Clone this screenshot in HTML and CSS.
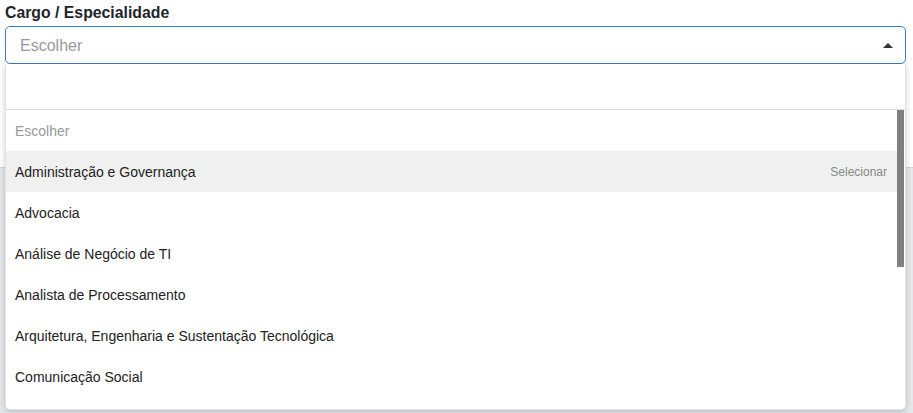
FILE: index.html
```html
<!DOCTYPE html>
<html lang="pt-BR">
<head>
  <meta charset="UTF-8">
  <meta name="viewport" content="width=913, initial-scale=1.0">
  <title>Cargo / Especialidade</title>
  <link rel="stylesheet" href="styles.css">
</head>
<body>
  <div class="field">
    <label class="field-label">Cargo / Especialidade</label>
    <div class="select open">
      <span class="select-placeholder">Escolher</span>
      <span class="select-caret"></span>
    </div>
    <div class="backdrop"></div>
    <div class="dropdown">
      <div class="dropdown-search">
        <input type="text" class="search-input">
      </div>
      <div class="options-wrap">
        <ul class="options">
          <li class="option placeholder">Escolher</li>
          <li class="option highlighted">Administração e Governança <span class="hint">Selecionar</span></li>
          <li class="option">Advocacia</li>
          <li class="option">Análise de Negócio de TI</li>
          <li class="option">Analista de Processamento</li>
          <li class="option">Arquitetura, Engenharia e Sustentação Tecnológica</li>
          <li class="option">Comunicação Social</li>
        </ul>
        <div class="scroll-thumb"></div>
      </div>
    </div>
  </div>
</body>
</html>
```

FILE: styles.css
```css
body { margin: 0; padding: 0 7px 0 5px; font-family: "Liberation Sans", Arial, sans-serif; background: #fff; color: #222; }
.field { position: relative; padding-top: 3px; }
.field-label {
  display: block;
  font-size: 15.8px;
  font-weight: bold;
  line-height: 20px;
  color: #212529;
  margin-bottom: 3px;
}
.select {
  display: flex;
  align-items: center;
  justify-content: space-between;
  border: 1px solid #3b7bce;
  border-radius: 5px;
  padding: 2px 12px 0 14px;
  height: 34px;
  background: #fff;
}
.select-placeholder { font-size: 16px; color: #999; }
.select-caret {
  width: 0;
  height: 0;
  margin-top: -2px;
  border-left: 5px solid transparent;
  border-right: 5px solid transparent;
  border-bottom: 5px solid #333;
}
.backdrop {
  height: 260px;
  margin: 103px -7px 0 -5px;
  background: #e5e7eb;
  border-top: 1px solid #cfd3d9;
}
.dropdown {
  position: absolute;
  top: 64px;
  left: 0;
  right: 0;
  background: #fff;
  border: 1px solid #e2e2e2;
  border-top: none;
  border-radius: 0 0 5px 5px;
  box-shadow: 0 2px 6px rgba(0, 0, 0, 0.18);
  overflow: hidden;
}
.dropdown-search {
  height: 46px;
  border-bottom: 1px solid #dcdcdc;
  padding: 9px 9px;
  box-sizing: border-box;
}
.search-input { width: 100%; height: 28px; border: none; outline: none; background: transparent; }
.options-wrap { position: relative; height: 299px; }
.options {
  list-style: none;
  margin: 0;
  padding: 0 8px 0 0;
}
.scroll-thumb {
  position: absolute;
  top: 0;
  right: 1px;
  width: 7px;
  height: 157px;
  background: #808080;
}
.option {
  display: flex;
  align-items: center;
  justify-content: space-between;
  height: 41px;
  padding: 0 10px 0 9px;
  font-size: 14px;
  color: #222;
}
.option.placeholder { color: #999; }
.option.highlighted { background: #f0f0f0; }
.hint { font-size: 12px; color: #888; }
```
